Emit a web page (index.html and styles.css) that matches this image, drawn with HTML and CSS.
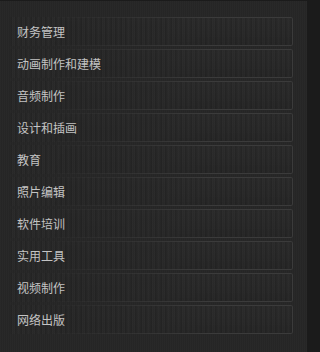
FILE: index.html
```html
<!DOCTYPE html>
<html lang="zh">
<head>
<meta charset="utf-8">
<link rel="stylesheet" href="styles.css">
</head>
<body>
<div class="panel">
  <ul class="menu">
    <li class="item">财务管理</li>
    <li class="item">动画制作和建模</li>
    <li class="item">音频制作</li>
    <li class="item">设计和插画</li>
    <li class="item">教育</li>
    <li class="item">照片编辑</li>
    <li class="item">软件培训</li>
    <li class="item">实用工具</li>
    <li class="item">视频制作</li>
    <li class="item">网络出版</li>
  </ul>
</div>
</body>
</html>
```
FILE: styles.css
```css
html, body {
  margin: 0;
  padding: 0;
  background: #1b1b1b;
}
body {
  width: 310px;
  height: 352px;
  overflow: hidden;
}
.panel {
  width: 307px;
  height: 351px;
  margin-top: 1px;
  background-color: #262626;
  background-image: repeating-linear-gradient(90deg, rgba(255,255,255,0.012) 0 1px, rgba(0,0,0,0.02) 1px 2px);
  box-sizing: border-box;
  padding: 16px 14px 0 10px;
}
.menu {
  list-style: none;
  margin: 0;
  padding: 0;
  display: flex;
  flex-direction: column;
  gap: 3px;
}
.item {
  position: relative;
  height: 29px;
  box-sizing: border-box;
  padding-left: 7px;
  display: flex;
  align-items: center;
  font-family: "Noto Sans CJK SC", "Noto Sans", sans-serif;
  font-size: 12px;
  color: #c4c4c4;
  background-image: repeating-linear-gradient(90deg, rgba(0,0,0,0.05) 0 2px, rgba(255,255,255,0.012) 2px 5px);
}
.item::before {
  content: "";
  position: absolute;
  inset: 0;
  border: 1px solid #3b3b3b;
  border-radius: 2px;
  background: linear-gradient(180deg, rgba(255,255,255,0.01), rgba(0,0,0,0.03));
  -webkit-mask-image: linear-gradient(90deg, transparent 12%, #000 70%);
  mask-image: linear-gradient(90deg, transparent 12%, #000 70%);
  pointer-events: none;
}
```
